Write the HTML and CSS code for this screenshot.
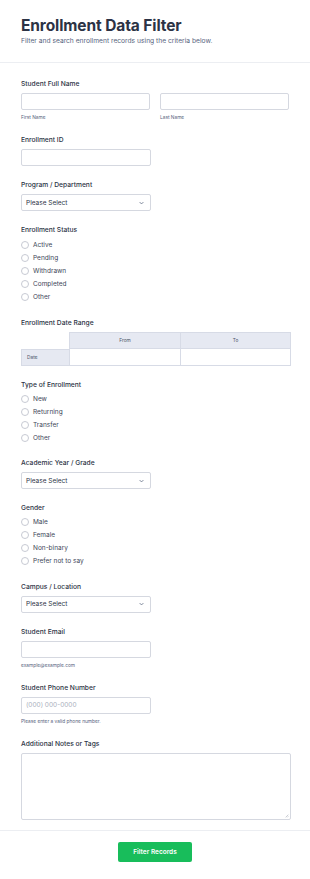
FILE: index.html
```html
<!DOCTYPE html>
<html>
<head>
<meta charset="utf-8">
<link rel="stylesheet" href="styles.css">
</head>
<body>
<div class="page">
  <header class="header">
    <h1 class="title">Enrollment Data Filter</h1>
    <p class="subtitle">Filter and search enrollment records using the criteria below.</p>
  </header>
  <form class="form">
    <div class="field">
      <div class="label">Student Full Name</div>
      <div class="name-row">
        <div class="name-col">
          <div class="input"></div>
          <div class="sublabel">First Name</div>
        </div>
        <div class="name-col">
          <div class="input"></div>
          <div class="sublabel">Last Name</div>
        </div>
      </div>
    </div>
    <div class="field">
      <div class="label">Enrollment ID</div>
      <div class="input half"></div>
    </div>
    <div class="field">
      <div class="label">Program / Department</div>
      <div class="select half"><span>Please Select</span><svg class="chev" viewBox="0 0 8 5" width="5" height="4"><path d="M1 1l3 3 3-3" fill="none" stroke="#57647e" stroke-width="1.2"/></svg></div>
    </div>
    <div class="field">
      <div class="label radio-label status-label">Enrollment Status</div>
      <div class="radio"><span class="circle"></span>Active</div>
      <div class="radio"><span class="circle"></span>Pending</div>
      <div class="radio"><span class="circle"></span>Withdrawn</div>
      <div class="radio"><span class="circle"></span>Completed</div>
      <div class="radio"><span class="circle"></span>Other</div>
    </div>
    <div class="field">
      <div class="label label-table">Enrollment Date Range</div>
      <div class="table">
        <div class="cell corner"></div>
        <div class="cell head">From</div>
        <div class="cell head">To</div>
        <div class="cell rowhead">Date</div>
        <div class="cell data"></div>
        <div class="cell data last"></div>
      </div>
    </div>
    <div class="field">
      <div class="label radio-label">Type of Enrollment</div>
      <div class="radio"><span class="circle"></span>New</div>
      <div class="radio"><span class="circle"></span>Returning</div>
      <div class="radio"><span class="circle"></span>Transfer</div>
      <div class="radio"><span class="circle"></span>Other</div>
    </div>
    <div class="field">
      <div class="label">Academic Year / Grade</div>
      <div class="select half"><span>Please Select</span><svg class="chev" viewBox="0 0 8 5" width="5" height="4"><path d="M1 1l3 3 3-3" fill="none" stroke="#57647e" stroke-width="1.2"/></svg></div>
    </div>
    <div class="field">
      <div class="label radio-label">Gender</div>
      <div class="radio"><span class="circle"></span>Male</div>
      <div class="radio"><span class="circle"></span>Female</div>
      <div class="radio"><span class="circle"></span>Non-binary</div>
      <div class="radio"><span class="circle"></span>Prefer not to say</div>
    </div>
    <div class="field">
      <div class="label">Campus / Location</div>
      <div class="select half"><span>Please Select</span><svg class="chev" viewBox="0 0 8 5" width="5" height="4"><path d="M1 1l3 3 3-3" fill="none" stroke="#57647e" stroke-width="1.2"/></svg></div>
    </div>
    <div class="field">
      <div class="label">Student Email</div>
      <div class="input half"></div>
      <div class="sublabel">example@example.com</div>
    </div>
    <div class="field">
      <div class="label">Student Phone Number</div>
      <div class="input half placeholder">(000) 000-0000</div>
      <div class="sublabel">Please enter a valid phone number.</div>
    </div>
    <div class="field last-field">
      <div class="label">Additional Notes or Tags</div>
      <div class="textarea"><svg class="grip" viewBox="0 0 6 6" width="4" height="4"><path d="M5 1L1 5M5 3.5L3.5 5" stroke="#9aa0ae" stroke-width="0.8"/></svg></div>
    </div>
  </form>
  <div class="footer">
    <button class="submit" type="button">Filter Records</button>
  </div>
</div>
</body>
</html>
```
FILE: styles.css
```css
* { box-sizing: border-box; }
html, body { margin: 0; padding: 0; background: #fff; }
body { font-family: Inter, "Noto Sans", sans-serif; color: #2c3345; }
.page { width: 310px; }
.header { padding: 16px 21px 16px; border-bottom: 1px solid #eceef2; }
.title { margin: 0; font-size: 15.5px; line-height: 20px; font-weight: 700; color: #2c3345; letter-spacing: -0.1px; }
.subtitle { margin: 0; font-size: 6.7px; line-height: 10px; color: #57647e; }
.form { padding: 16px 21px 10px; display: flex; flex-direction: column; gap: 14px; }
.label { font-size: 6.7px; line-height: 10px; font-weight: 500; color: #2c3345; margin-bottom: 4px; }
.radio-label { margin-bottom: 2.5px; }
.status-label { margin-bottom: 3.5px; }
.label-table { margin-bottom: 4px; }
.name-row { display: flex; gap: 10px; }
.name-col { flex: 1; }
.input, .select { height: 17px; border: 1px solid #d5d8e0; border-radius: 2px; background: #fff; }
.half { width: 130px; }
.select { display: flex; align-items: center; justify-content: space-between; padding: 0 6px 0 4px; font-size: 6.5px; font-weight: 400; color: #2c3345; }
.chev { display: block; }
.placeholder { font-size: 6.5px; color: #aab0bd; line-height: 15px; padding-left: 4px; }
.sublabel { margin-top: 3px; font-size: 4.8px; line-height: 8px; color: #57647e; }
.radio { display: flex; align-items: center; height: 13px; font-size: 6.5px; color: #3e4658; font-weight: 400; }
.circle { width: 8px; height: 8px; border: 1px solid #c7cad3; border-radius: 50%; margin-right: 4px; flex: none; }
.table { display: grid; grid-template-columns: 48px 111px 111px; grid-template-rows: 17px 17px; width: 270px; }
.cell { border-color: #d7dbe6; border-style: solid; border-width: 0; font-size: 4.8px; color: #4b5568; display: flex; align-items: center; }
.corner { background: #fff; }
.head { background: #e6e9f2; justify-content: center; border-top-width: 1px; border-left-width: 1px; border-bottom-width: 1px; }
.head:nth-child(3) { border-right-width: 1px; }
.rowhead { background: #e6e9f2; padding-left: 5px; border-left-width: 1px; border-bottom-width: 1px; border-top-width: 1px; }
.data { background: #fff; border-left-width: 1px; border-bottom-width: 1px; }
.data.last { border-right-width: 1px; }
.textarea { position: relative; width: 270px; height: 67px; border: 1px solid #d5d8e0; border-radius: 2px; }
.grip { position: absolute; right: 1px; bottom: 1px; }
.footer { border-top: 1px solid #eceef2; padding: 11px 0 17px; display: flex; justify-content: center; }
.submit { width: 74px; height: 20px; border: 0; border-radius: 2px; background: #18bd5b; color: #fff; font-family: Inter, "Noto Sans", sans-serif; font-size: 6.5px; font-weight: 600; padding: 0; }
```
